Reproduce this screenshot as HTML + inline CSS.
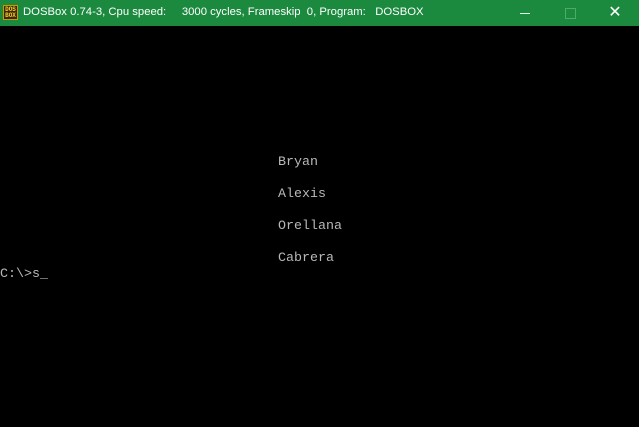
<!DOCTYPE html>
<html><head><meta charset="utf-8"><style>
*{margin:0;padding:0;box-sizing:border-box}
body{width:639px;height:426px;background:#000;overflow:hidden;position:relative;font-family:"Liberation Sans",sans-serif}
.tb{position:absolute;left:0;top:0;width:639px;height:26px;background:#1b8a3f;color:#fff;font-size:11.3px}
.tb .t{position:absolute;left:23px;top:6px;white-space:pre}
.ico{position:absolute;left:3px;top:5px;width:15px;height:15px;background:#3a2a00;border:1px solid #c90;font:bold 6px/6px "Liberation Mono",monospace;color:#fc3;text-align:center;padding-top:1px}
.ctl{position:absolute;top:0;height:26px;width:46px}
.min{left:502px}.min:after{content:"";position:absolute;left:18px;top:13px;width:10px;height:1px;background:#dfe}
.max{left:548px}.max:after{content:"";position:absolute;left:17px;top:8px;width:9px;height:9px;border:1px solid #4caa6a}
.cls{left:592px;color:#fff;font-size:16px;text-align:center;line-height:26px}
.scr{position:absolute;left:0;top:27px;width:640px;height:400px;font-family:"Liberation Mono",monospace;font-size:13.33px;color:#b8b8b8}
.l{position:absolute;height:16px;line-height:16px;white-space:pre}
</style></head><body>
<div class="tb"><div class="ico">DOS<br>BOX</div><div class="t">DOSBox 0.74-3, Cpu speed:     3000 cycles, Frameskip  0, Program:   DOSBOX</div>
<div class="ctl min"></div><div class="ctl max"></div><div class="ctl cls">✕</div></div>
<div class="scr">
<div class="l" style="left:278px;top:128px">Bryan</div>
<div class="l" style="left:278px;top:160px">Alexis</div>
<div class="l" style="left:278px;top:192px">Orellana</div>
<div class="l" style="left:278px;top:224px">Cabrera</div>
<div class="l" style="left:0;top:240px">C:\&gt;s_</div>
</div>
</body></html>
